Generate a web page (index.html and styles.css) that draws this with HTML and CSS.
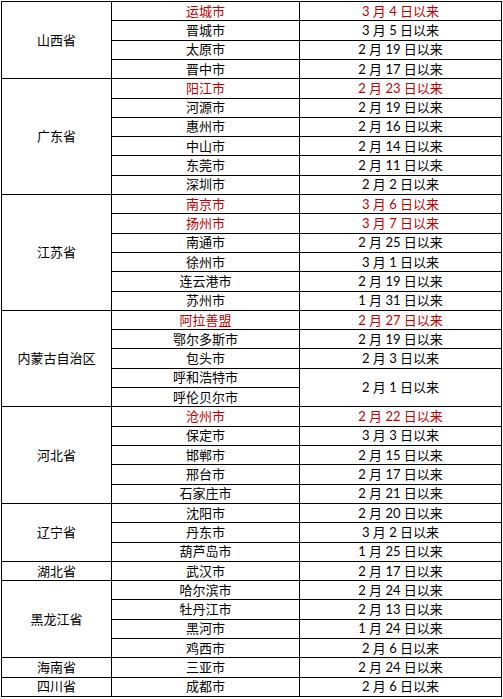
FILE: index.html
```html
<!DOCTYPE html>
<html lang="zh-CN">
<head>
<meta charset="utf-8">
<link rel="stylesheet" href="styles.css">
</head>
<body>
<div class="sheet">
  <div class="prov s4">山西省</div>
  <div class="city red">运城市</div><div class="date red">3 月 4 日以来</div>
  <div class="city">晋城市</div><div class="date">3 月 5 日以来</div>
  <div class="city">太原市</div><div class="date">2 月 19 日以来</div>
  <div class="city">晋中市</div><div class="date">2 月 17 日以来</div>

  <div class="prov s6">广东省</div>
  <div class="city red">阳江市</div><div class="date red">2 月 23 日以来</div>
  <div class="city">河源市</div><div class="date">2 月 19 日以来</div>
  <div class="city">惠州市</div><div class="date">2 月 16 日以来</div>
  <div class="city">中山市</div><div class="date">2 月 14 日以来</div>
  <div class="city">东莞市</div><div class="date">2 月 11 日以来</div>
  <div class="city">深圳市</div><div class="date">2 月 2 日以来</div>

  <div class="prov s6">江苏省</div>
  <div class="city red">南京市</div><div class="date red">3 月 6 日以来</div>
  <div class="city red">扬州市</div><div class="date red">3 月 7 日以来</div>
  <div class="city">南通市</div><div class="date">2 月 25 日以来</div>
  <div class="city">徐州市</div><div class="date">3 月 1 日以来</div>
  <div class="city">连云港市</div><div class="date">2 月 19 日以来</div>
  <div class="city">苏州市</div><div class="date">1 月 31 日以来</div>

  <div class="prov s5">内蒙古自治区</div>
  <div class="city red">阿拉善盟</div><div class="date red">2 月 27 日以来</div>
  <div class="city">鄂尔多斯市</div><div class="date">2 月 19 日以来</div>
  <div class="city">包头市</div><div class="date">2 月 3 日以来</div>
  <div class="city">呼和浩特市</div><div class="date s2">2 月 1 日以来</div>
  <div class="city">呼伦贝尔市</div>

  <div class="prov s5">河北省</div>
  <div class="city red">沧州市</div><div class="date red">2 月 22 日以来</div>
  <div class="city">保定市</div><div class="date">3 月 3 日以来</div>
  <div class="city">邯郸市</div><div class="date">2 月 15 日以来</div>
  <div class="city">邢台市</div><div class="date">2 月 17 日以来</div>
  <div class="city">石家庄市</div><div class="date">2 月 21 日以来</div>

  <div class="prov s3">辽宁省</div>
  <div class="city">沈阳市</div><div class="date">2 月 20 日以来</div>
  <div class="city">丹东市</div><div class="date">3 月 2 日以来</div>
  <div class="city">葫芦岛市</div><div class="date">1 月 25 日以来</div>

  <div class="prov">湖北省</div>
  <div class="city">武汉市</div><div class="date">2 月 17 日以来</div>

  <div class="prov s4">黑龙江省</div>
  <div class="city">哈尔滨市</div><div class="date">2 月 24 日以来</div>
  <div class="city">牡丹江市</div><div class="date">2 月 13 日以来</div>
  <div class="city">黑河市</div><div class="date">1 月 24 日以来</div>
  <div class="city">鸡西市</div><div class="date">2 月 6 日以来</div>

  <div class="prov">海南省</div>
  <div class="city">三亚市</div><div class="date">2 月 24 日以来</div>

  <div class="prov">四川省</div>
  <div class="city">成都市</div><div class="date">2 月 6 日以来</div>
</div>
</body>
</html>
```

FILE: styles.css
```css
html, body {
  margin: 0;
  padding: 0;
  background: #fff;
}

body {
  padding: 1px 0 0 1px;
}

.sheet {
  box-sizing: border-box;
  width: 501px;
  height: 696px;
  display: grid;
  grid-template-columns: 110px 188px 202px;
  grid-template-rows: repeat(36, 1fr);
  border-top: 1px solid #000;
  border-left: 1px solid #000;
  font-family: Lato, "Noto Sans CJK SC", sans-serif;
  font-size: 13px;
  color: #000;
}

.prov, .city, .date {
  box-sizing: border-box;
  border-right: 1px solid #000;
  border-bottom: 1px solid #000;
  display: flex;
  align-items: center;
  justify-content: center;
  white-space: pre;
  line-height: 1;
}

.prov { grid-column: 1; }
.city { grid-column: 2; }
.date { grid-column: 3; }

.s2 { grid-row: span 2; }
.s3 { grid-row: span 3; }
.s4 { grid-row: span 4; }
.s5 { grid-row: span 5; }
.s6 { grid-row: span 6; }

.red { color: #c00000; }
```
